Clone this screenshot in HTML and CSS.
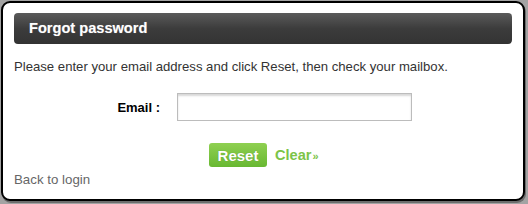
FILE: index.html
```html
<!DOCTYPE html>
<html>
<head>
<meta charset="utf-8">
<link rel="stylesheet" href="styles.css">
</head>
<body>
<div class="box">
  <div class="header">Forgot password</div>
  <p class="intro">Please enter your email address and click Reset, then check your mailbox.</p>
  <div class="row">
    <label class="label" for="email">Email :</label>
    <input class="input" id="email" type="text">
  </div>
  <div class="actions">
    <button class="btn">Reset</button>
    <a class="clear" href="#">Clear<span class="raquo">»</span></a>
  </div>
  <a class="back" href="#">Back to login</a>
</div>
</body>
</html>
```
FILE: styles.css
```css
html, body {
  margin: 0;
  padding: 0;
  background: #a3a3a3;
  font-family: "Liberation Sans", Arial, sans-serif;
}
body {
  padding: 1px 0 0 1px;
  width: 528px;
  height: 204px;
  box-sizing: border-box;
}
.box {
  width: 524px;
  height: 200px;
  box-sizing: border-box;
  background: #fff;
  border: 2px solid #000;
  border-radius: 9px;
  padding: 10px 11px 0 11px;
  box-shadow: 1px 2px 0 #6d6d6d;
}
.header {
  height: 31px;
  border-radius: 4px;
  background: linear-gradient(#5a5a5a, #3c3c3c 50%, #333);
  color: #fff;
  font-weight: bold;
  font-size: 14.6px;
  line-height: 31px;
  padding-left: 15px;
  text-shadow: 0 0 1px rgba(255,255,255,0.4);
}
.intro {
  margin: 15px 0 0 0;
  font-size: 13.15px;
  color: #333;
  line-height: 16px;
}
.row {
  display: flex;
  align-items: center;
  margin-top: 18px;
}
.label {
  width: 146px;
  text-align: right;
  font-weight: bold;
  font-size: 13px;
  color: #000;
}
.input {
  margin-left: 17px;
  width: 235px;
  height: 28px;
  box-sizing: border-box;
  border: 1px solid #bcbcbc;
  box-shadow: inset 0 2px 2px #d8d8d8;
  padding: 0 4px;
  outline: none;
}
.actions {
  display: flex;
  align-items: center;
  margin-top: 22px;
  padding-left: 195px;
}
.btn {
  height: 24px;
  width: 58px;
  border: 0;
  border-radius: 3px;
  background: linear-gradient(#8fd051, #68b832);
  color: #fff;
  font-family: "Liberation Sans", Arial, sans-serif;
  font-weight: bold;
  font-size: 15px;
  padding: 0;
  text-shadow: 0 0 1px rgba(0,0,0,0.25);
}
.clear {
  margin-left: 8px;
  color: #7cc448;
  font-weight: bold;
  font-size: 14.6px;
  text-decoration: none;
}
.raquo {
  font-size: 11px;
  margin-left: 1px;
}
.back {
  display: block;
  margin-top: 5px;
  font-size: 13.3px;
  line-height: 16px;
  color: #666;
  text-decoration: none;
}
```
